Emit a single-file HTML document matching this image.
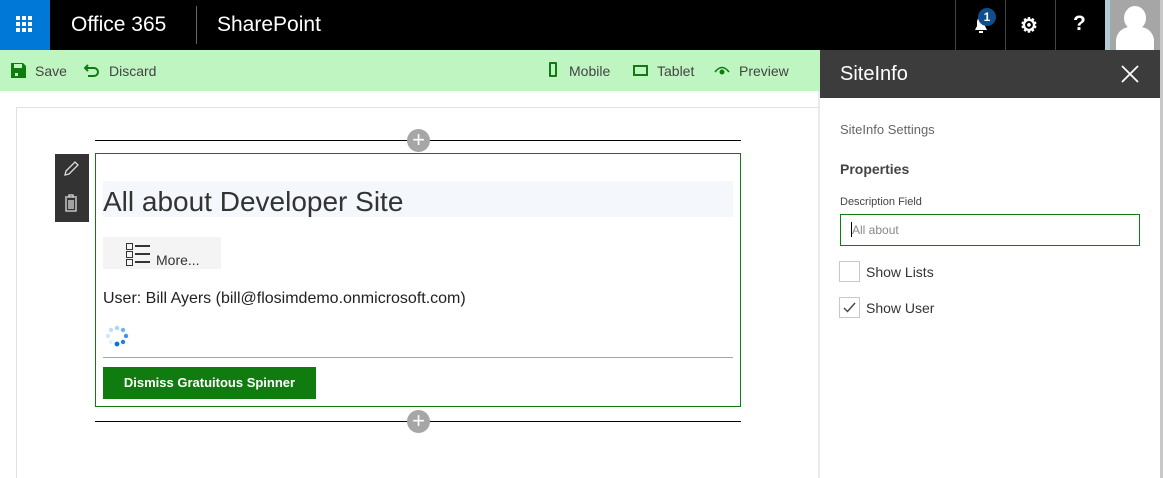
<!DOCTYPE html>
<html><head><style>
*{margin:0;padding:0;box-sizing:border-box}
body{width:1163px;height:478px;position:relative;overflow:hidden;background:#fff;font-family:"Segoe UI","Liberation Sans",sans-serif;color:#333}
.a{position:absolute}
</style></head><body>
<div class="a" style="left:0;top:0;width:1163px;height:50px;background:#000"></div>
<div class="a" style="left:0;top:0;width:50px;height:50px;background:#0078d7"></div>
<svg class="a" style="left:16px;top:16px" width="18" height="18"><g fill="#fff"><rect x="0" y="0" width="4" height="4"/><rect x="6" y="0" width="4" height="4"/><rect x="12" y="0" width="4" height="4"/><rect x="0" y="6" width="4" height="4"/><rect x="6" y="6" width="4" height="4"/><rect x="12" y="6" width="4" height="4"/><rect x="0" y="12" width="4" height="4"/><rect x="6" y="12" width="4" height="4"/><rect x="12" y="12" width="4" height="4"/></g></svg>
<div class="a" style="left:71px;top:13px;color:#fff;font-size:21px">Office 365</div>
<div class="a" style="left:196px;top:6px;width:1px;height:38px;background:#666"></div>
<div class="a" style="left:217px;top:13px;color:#fff;font-size:21px">SharePoint</div>
<div class="a" style="left:955px;top:0;width:1px;height:50px;background:#444"></div>
<div class="a" style="left:1005px;top:0;width:1px;height:50px;background:#444"></div>
<div class="a" style="left:1055px;top:0;width:1px;height:50px;background:#444"></div>
<svg class="a" style="left:972px;top:14px" width="18" height="22"><path d="M3 16 L15 16 L13 12 L13 8 A4 5 0 0 0 5 8 L5 12 Z" fill="#fff"/><rect x="7" y="17" width="4" height="2" fill="#fff"/></svg>
<div class="a" style="left:978px;top:8px;width:18px;height:18px;border-radius:50%;background:#0f4e8a;color:#fff;font-size:12px;font-weight:bold;text-align:center;line-height:18px">1</div>
<div class="a" style="left:1020px;top:13px;color:#fff;font-size:20px;font-weight:bold">⚙</div>
<div class="a" style="left:1073px;top:12px;color:#fff;font-size:21px;font-weight:bold">?</div>
<div class="a" style="left:1105px;top:0;width:5px;height:50px;background:#b0cbd6"></div>
<div class="a" style="left:1110px;top:0;width:50px;height:50px;background:#a6a6a6;overflow:hidden"><div class="a" style="left:14px;top:6px;width:22px;height:24px;border-radius:50%;background:#fff"></div><div class="a" style="left:6px;top:27px;width:38px;height:30px;border-radius:14px 14px 0 0;background:#fff"></div></div>
<div class="a" style="left:1160px;top:0;width:3px;height:478px;background:#c8c8c8"></div>
<div class="a" style="left:0;top:50px;width:820px;height:41px;background:#bff5c0"></div>
<svg class="a" style="left:11px;top:63px" width="15" height="15"><path d="M0 0H12L15 3V15H0Z" fill="#107c10"/><rect x="3" y="1" width="8" height="4" fill="#bff5c0"/><rect x="4" y="10" width="3" height="3" fill="#bff5c0"/></svg>
<div class="a" style="left:35px;top:63px;font-size:14px;color:#444">Save</div>
<svg class="a" style="left:84px;top:63px" width="16" height="15"><path d="M4 2 L1 5 L4 8 M1 5 H10 A4 4 0 0 1 10 13 H4" fill="none" stroke="#107c10" stroke-width="2"/></svg>
<div class="a" style="left:109px;top:63px;font-size:14px;color:#444">Discard</div>
<div class="a" style="left:549px;top:62px;width:8px;height:15px;border:2px solid #107c10;border-radius:1px"></div>
<div class="a" style="left:569px;top:63px;font-size:14px;color:#444">Mobile</div>
<div class="a" style="left:633px;top:65px;width:15px;height:11px;border:2px solid #107c10"></div>
<div class="a" style="left:657px;top:63px;font-size:14px;color:#444">Tablet</div>
<svg class="a" style="left:714px;top:65px" width="16" height="10"><path d="M1 7 Q8 -2 15 7" fill="none" stroke="#107c10" stroke-width="1.5"/><circle cx="8" cy="7" r="2.5" fill="#107c10"/></svg>
<div class="a" style="left:739px;top:63px;font-size:14px;color:#444">Preview</div>
<div class="a" style="left:16px;top:107px;width:804px;height:1px;background:#e1e1e1"></div>
<div class="a" style="left:16px;top:107px;width:1px;height:371px;background:#e1e1e1"></div>
<div class="a" style="left:818px;top:91px;width:2px;height:387px;background:#eaeaea"></div>
<div class="a" style="left:95px;top:140px;width:646px;height:1px;background:#000"></div>
<div class="a" style="left:407px;top:129px;width:23px;height:23px;border-radius:50%;background:#a6a6a6;color:#fff;font-size:22px;line-height:21px;text-align:center">+</div>
<div class="a" style="left:95px;top:421px;width:646px;height:1px;background:#000"></div>
<div class="a" style="left:407px;top:410px;width:23px;height:23px;border-radius:50%;background:#a6a6a6;color:#fff;font-size:22px;line-height:21px;text-align:center">+</div>
<div class="a" style="left:95px;top:153px;width:646px;height:254px;border:1px solid #107c10"></div>
<div class="a" style="left:55px;top:154px;width:34px;height:68px;background:#333"></div>
<svg class="a" style="left:62px;top:160px" width="18" height="18"><path d="M3 15 L4 11 L13 2 L16 5 L7 14 Z" fill="none" stroke="#ddd" stroke-width="1.3"/></svg>
<svg class="a" style="left:64px;top:194px" width="14" height="18"><path d="M1 3H13M5 3V1H9V3M2 4V17H12V4M5 6V15M7 6V15M9 6V15" fill="none" stroke="#ddd" stroke-width="1.3"/></svg>
<div class="a" style="left:103px;top:181px;width:630px;height:36px;background:#f4f8fc"></div>
<div class="a" style="left:103px;top:186px;font-size:28px;color:#333">All about Developer Site</div>
<div class="a" style="left:103px;top:237px;width:118px;height:32px;background:#f4f4f4"></div>
<svg class="a" style="left:126px;top:243px" width="26" height="24"><g fill="none" stroke="#333"><rect x="0.5" y="0.5" width="6" height="6"/><rect x="0.5" y="8.5" width="6" height="6"/><rect x="0.5" y="16.5" width="6" height="6"/></g><g fill="#333"><rect x="9" y="2" width="15" height="2"/><rect x="9" y="10" width="15" height="2"/><rect x="9" y="18" width="15" height="2"/></g></svg>
<div class="a" style="left:156px;top:252px;font-size:14px">More...</div>
<div class="a" style="left:103px;top:290px;font-size:16px;color:#222">User: Bill Ayers (bill@flosimdemo.onmicrosoft.com)</div>
<svg class="a" style="left:103px;top:323px" width="28" height="28"><circle cx="14" cy="5" r="2.2" fill="#aed4f5"/><circle cx="20" cy="7" r="2.2" fill="#6fb2ec"/><circle cx="23" cy="13" r="2.2" fill="#3a95e4"/><circle cx="20" cy="19" r="2.2" fill="#1f80dc"/><circle cx="14" cy="21" r="2.4" fill="#0f70d6"/><circle cx="8" cy="19" r="2.2" fill="#e6f1fb"/><circle cx="5" cy="13" r="2.2" fill="#d3e7f9"/><circle cx="8" cy="7" r="2.2" fill="#c2ddf7"/></svg>
<div class="a" style="left:103px;top:357px;width:630px;height:1px;background:#a6a6a6"></div>
<div class="a" style="left:103px;top:367px;width:213px;height:32px;background:#107c10;color:#fff;font-size:13px;font-weight:bold;text-align:center;line-height:32px">Dismiss Gratuitous Spinner</div>
<div class="a" style="left:820px;top:50px;width:340px;height:48px;background:#3c3c3c"></div>
<div class="a" style="left:840px;top:63px;color:#fff;font-size:20px">SiteInfo</div>
<svg class="a" style="left:1121px;top:65px" width="18" height="18"><path d="M1 1L17 17M17 1L1 17" stroke="#fff" stroke-width="1.8"/></svg>
<div class="a" style="left:840px;top:122px;font-size:13px;color:#666">SiteInfo Settings</div>
<div class="a" style="left:840px;top:161px;font-size:14px;font-weight:bold;color:#444">Properties</div>
<div class="a" style="left:840px;top:196px;font-size:11px;color:#444">Description Field</div>
<div class="a" style="left:840px;top:214px;width:300px;height:32px;border:1px solid #107c10"></div>
<div class="a" style="left:851px;top:222px;width:1px;height:15px;background:#000"></div>
<div class="a" style="left:852px;top:223px;font-size:12px;color:#888">All about</div>
<div class="a" style="left:839px;top:261px;width:21px;height:21px;border:1px solid #c8c8c8"></div>
<div class="a" style="left:866px;top:264px;font-size:14px;color:#333">Show Lists</div>
<div class="a" style="left:839px;top:297px;width:21px;height:21px;border:1px solid #c8c8c8"></div>
<svg class="a" style="left:843px;top:302px" width="13" height="11"><path d="M1 6L4.5 9.5L12 1" fill="none" stroke="#444" stroke-width="1.4"/></svg>
<div class="a" style="left:866px;top:300px;font-size:14px;color:#333">Show User</div>
</body></html>
